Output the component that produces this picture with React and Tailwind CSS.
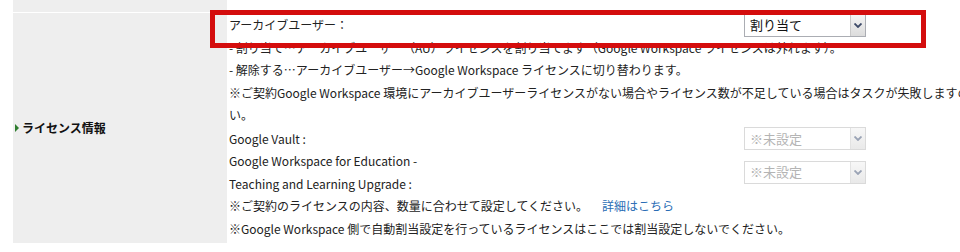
import React from 'react';

const Chevron = ({ color }) => (
  <svg width="8" height="5" viewBox="0 0 8 5">
    <path d="M0.5 0.5 L4 4 L7.5 0.5" fill="none" stroke={color} strokeWidth="1.8" />
  </svg>
);

const Select = ({ value, disabled }) => (
  <div
    className={`flex w-[122px] h-[23px] border bg-white ${
      disabled ? 'border-[#dadada]' : 'border-[#abadb3]'
    }`}
  >
    <div
      className={`flex-1 flex items-center pl-[5px] text-[13px] ${
        disabled ? 'text-[#b4b4b4]' : 'text-[#111]'
      }`}
    >
      {value}
    </div>
    <div
      className={`w-[15px] flex items-center justify-center border-l bg-gradient-to-b ${
        disabled
          ? 'border-[#e2e2e2] from-[#f7f7f7] to-[#e9e9e9]'
          : 'border-[#c9c9c9] from-[#f4f4f4] to-[#dcdcdc]'
      }`}
    >
      <Chevron color={disabled ? '#9aa3b5' : '#3d4a68'} />
    </div>
  </div>
);

export default function App() {
  return (
    <div
      className="relative w-[960px] h-[252px] overflow-hidden bg-white text-[12px] text-[#222]"
      style={{ fontFamily: '"Noto Sans CJK JP", "Noto Sans", sans-serif' }}
    >
      <div className="pl-[13px]">
        {/* previous row */}
        <div className="flex h-[12px]">
          <div className="w-[214px] bg-[#eeeeee]" />
          <div className="flex-1" />
        </div>

        {/* license row */}
        <div className="flex mt-px">
          <div className="w-[214px] shrink-0 bg-[#eeeeee] flex items-center pl-[2px]">
            <span className="w-0 h-0 border-y-[4px] border-y-transparent border-l-[4px] border-l-[#2f7d2f]" />
            <span className="ml-[3px] font-bold text-[12px] text-[#111]">ライセンス情報</span>
          </div>

          <div className="flex-1 pl-[2px] pt-[1px] pb-[3px] leading-[22.5px] whitespace-nowrap">
            <div className="flex items-center h-[22.5px]">
              <span className="w-[515px]">アーカイブユーザー：</span>
              <Select value="割り当て" />
            </div>
            <div>- 割り当て…アーカイブユーザー（AU）ライセンスを割り当てます（Google Workspace ライセンスは外れます）。</div>
            <div>- 解除する…アーカイブユーザー→Google Workspace ライセンスに切り替わります。</div>
            <div>※ご契約Google Workspace 環境にアーカイブユーザーライセンスがない場合やライセンス数が不足している場合はタスクが失敗しますのでご注意くださ</div>
            <div>い。</div>
            <div className="flex items-center h-[22.5px] mt-[1px]">
              <span className="w-[515px]">Google Vault :</span>
              <Select value="※未設定" disabled />
            </div>
            <div className="flex items-center">
              <div className="w-[515px]">
                <div>Google Workspace for Education -</div>
                <div>Teaching and Learning Upgrade :</div>
              </div>
              <Select value="※未設定" disabled />
            </div>
            <div>
              ※ご契約のライセンスの内容、数量に合わせて設定してください。
              <span className="ml-[14px] text-[#2a6db5]">詳細はこちら</span>
            </div>
            <div>※Google Workspace 側で自動割当設定を行っているライセンスはここでは割当設定しないでください。</div>
          </div>
        </div>
      </div>

      {/* highlight annotation */}
      <div className="absolute left-[210px] top-[10px] w-[716px] h-[38px] border-[5px] border-[#d40d0d]" />
    </div>
  );
}
